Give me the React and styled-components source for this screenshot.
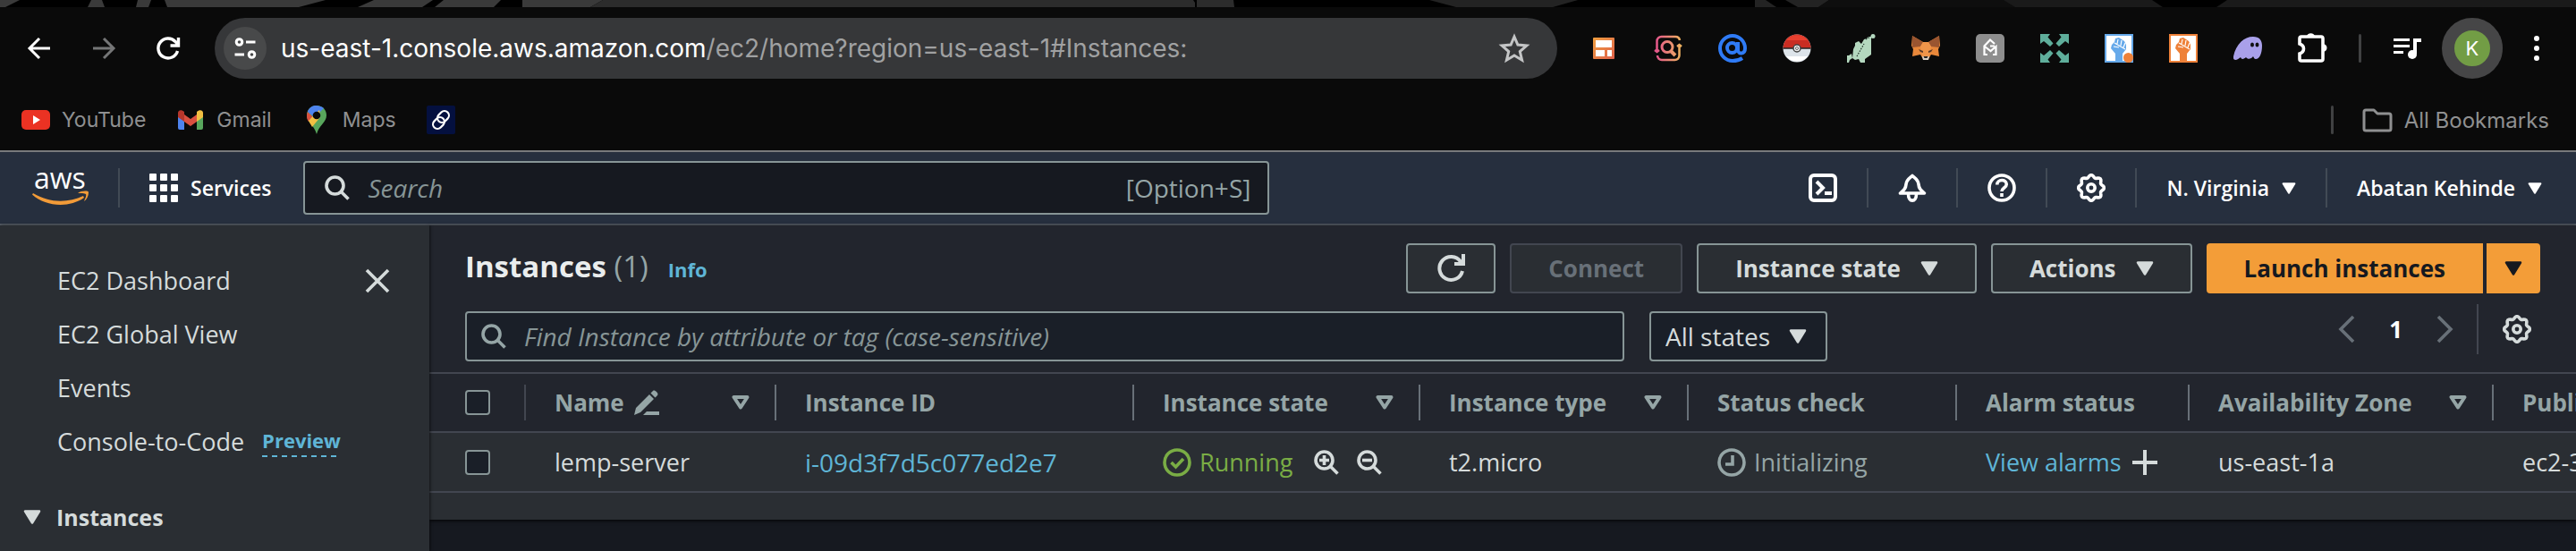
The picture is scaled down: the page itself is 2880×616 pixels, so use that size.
import React from 'react';
import styled, { createGlobalStyle } from 'styled-components';

const ui = '"Open Sans", "Noto Sans", sans-serif';
const browserUi = 'Inter, "Liberation Sans", sans-serif';

const c = {
  text: '#d5dbdb',
  muted: '#95a5a6',
  disabled: '#687078',
  link: '#5fb5d6',
  line: '#424650',
  control: '#879596',
  panel: '#2a2e33',
  header: '#22252d',
  field: '#1a1f28',
  page: '#161920',
  orange: '#f39d38',
  green: '#7aad45',
};

const GlobalStyle = createGlobalStyle`
  * { box-sizing: border-box; }
  html, body { margin: 0; background: ${c.page}; }
  body { overflow: hidden; }
  button, input, select { font: inherit; color: inherit; margin: 0; }
  button { border: 0; padding: 0; background: none; cursor: pointer; }
  a { color: inherit; text-decoration: none; }
  svg { display: block; flex: none; }
`;

/* ---------- Page ---------- */

const Page = styled.div`
  display: flex;
  flex-direction: column;
  min-height: 100vh;
  font-family: ${ui};
  color: ${c.text};
`;

/* ---------- Browser chrome ---------- */

const Browser = styled.header`
  background: #0a0a0a;
  font-family: ${browserUi};
  color: #8f9091;
`;

const Wallpaper = styled.svg`
  width: 100%;
  height: 8px;
`;

const Toolbar = styled.div`
  display: flex;
  align-items: center;
  padding: 12px 28px;
`;

const Cluster = styled.div`
  display: flex;
  align-items: center;
  gap: ${(p) => p.$gap}px;
`;

const IconButton = styled.button`
  display: flex;
  align-items: center;
  justify-content: center;
  width: 32px;
  height: 32px;
  color: ${(p) => p.$color || '#fff'};
`;

const AddressBar = styled.div`
  display: flex;
  flex: 1;
  align-items: center;
  gap: 16px;
  min-width: 0;
  height: 68px;
  margin: 0 36px;
  padding: 0 32px 0 10px;
  border-radius: 34px;
  background: #363739;
`;

const SiteInfo = styled.button`
  display: flex;
  flex: none;
  align-items: center;
  justify-content: center;
  width: 48px;
  height: 48px;
  border-radius: 50%;
  background: #48494a;
  color: #fff;
`;

const Address = styled.div`
  flex: 1;
  font-size: 28px;
  line-height: 40px;
  white-space: nowrap;
  color: #a0a1a2;
`;

const Host = styled.span`
  color: #fff;
`;

const Rule = styled.span`
  flex: none;
  width: 3px;
  height: 32px;
  border-radius: 2px;
  background: #404142;
  margin: ${(p) => p.$margin || '0'};
`;

const Avatar = styled.button`
  display: flex;
  align-items: center;
  justify-content: center;
  width: 68px;
  height: 68px;
  margin: 0 22px;
  border: 14px solid #464647;
  border-radius: 50%;
  background: #729d45;
  color: #fff;
  font-size: 22px;
`;

const Bookmarks = styled.nav`
  display: flex;
  align-items: center;
  justify-content: space-between;
  height: 68px;
  padding: 0 30px 0 24px;
`;

const Bookmark = styled.a`
  display: flex;
  align-items: center;
  gap: 13px;
  font-size: ${(p) => (p.$large ? 24 : 23)}px;
`;

/* ---------- Console navigation ---------- */

const NavBar = styled.nav`
  display: flex;
  align-items: center;
  justify-content: space-between;
  height: 84px;
  padding: 0 38px 0 36px;
  border-top: 2px solid #787a7c;
  border-bottom: 2px solid #545b64;
  background: #262f3e;
  color: #fff;
  font-size: 23px;
  font-weight: 600;
`;

const NavLeft = styled.div`
  display: flex;
  flex: 1;
  align-items: center;
`;

const NavRule = styled.span`
  flex: none;
  width: 2px;
  height: 44px;
  margin: 0 33px;
  background: #414a55;
`;

const NavItem = styled.button`
  display: flex;
  flex: none;
  align-items: center;
  gap: 14px;
  white-space: nowrap;
`;

const SearchField = styled.label`
  display: flex;
  align-items: center;
  flex: ${(p) => p.$flex};
  min-width: 0;
  height: ${(p) => p.$height}px;
  margin-left: ${(p) => p.$indent || 0}px;
  padding: 0 19px 0 ${(p) => p.$pad}px;
  border: 2px solid ${c.control};
  border-radius: 4px;
  background: ${(p) => p.$fill};
  color: ${(p) => p.$icon};
  font-size: 28px;
  font-weight: 400;

  input {
    flex: 1;
    min-width: 0;
    height: 100%;
    padding: 0 0 0 20px;
    border: 0;
    outline: 0;
    background: transparent;
  }
  input::placeholder {
    color: ${c.control};
    font-style: italic;
    opacity: 1;
  }
  kbd {
    font-family: inherit;
    color: ${c.muted};
  }
`;

/* ---------- Console body ---------- */

const Body = styled.div`
  display: grid;
  flex: 1;
  grid-template-columns: 480px minmax(0, 1fr);
`;

const Sidebar = styled.aside`
  position: relative;
  padding: 32px 44px 0 64px;
  background: ${c.panel};
  box-shadow: 1px 0 3px rgba(0, 0, 0, 0.6);
  font-size: 27px;
  line-height: 60px;
`;

const SideRow = styled.div`
  display: flex;
  align-items: center;
  justify-content: ${(p) => (p.$spread ? 'space-between' : 'flex-start')};
  gap: 20px;
`;

const PreviewTag = styled.a`
  padding-bottom: 4px;
  background: repeating-linear-gradient(90deg, ${c.link} 0 6px, transparent 6px 11px) left bottom / 100% 2px no-repeat;
  color: ${c.link};
  font-size: 22px;
  font-weight: 700;
  line-height: 30px;
`;

const SideGroup = styled.button`
  display: flex;
  align-items: center;
  gap: 17px;
  margin: 24px 0 0 -38px;
  font-size: 25px;
  font-weight: 700;
  line-height: 60px;
`;

const Main = styled.main`
  background: ${c.page};
`;

const Panel = styled.section`
  padding-bottom: 30px;
  background: ${c.panel};
  box-shadow: 0 1px 4px #000;
`;

const PanelHeader = styled.div`
  padding: 20px 40px 12px;
  border-bottom: 2px solid ${c.line};
  background: ${c.header};
`;

const HeaderRow = styled.div`
  display: flex;
  align-items: center;
  justify-content: space-between;
  height: 56px;
`;

const TitleRow = styled.div`
  display: flex;
  align-items: baseline;
  gap: 22px;
  line-height: 56px;
`;

const Title = styled.h1`
  margin: 0;
  font-size: 33px;
  line-height: 52px;
  color: #eaeded;

  span {
    font-weight: 400;
    color: ${c.muted};
  }
`;

const InfoLink = styled.a`
  color: ${c.link};
  font-size: 22px;
  font-weight: 700;
`;

const Button = styled.button`
  display: flex;
  align-items: center;
  justify-content: center;
  gap: 22px;
  height: 56px;
  padding: 0 ${(p) => p.$pad || 41}px;
  border: 2px solid ${c.control};
  border-radius: 4px;
  background: ${c.panel};
  font-size: 26px;
  font-weight: 700;
  white-space: nowrap;

  &:disabled {
    border-color: ${c.line};
    color: ${c.disabled};
  }
`;

const PrimaryButton = styled(Button)`
  border-color: ${c.orange};
  border-radius: ${(p) => (p.$end ? '0 4px 4px 0' : '4px 0 0 4px')};
  background: ${c.orange};
  color: #16191f;
`;

const FilterRow = styled.div`
  display: flex;
  align-items: flex-start;
  justify-content: space-between;
  margin-top: 12px;
`;

const Filters = styled.div`
  display: flex;
  flex: 0 1 1523px;
  gap: 28px;
  min-width: 0;
  padding-top: 8px;
`;

const SelectBox = styled.div`
  display: grid;
  flex: none;
  width: 199px;
  height: 56px;
  align-items: center;
  border: 2px solid ${c.control};
  border-radius: 4px;
  background: ${c.field};
  font-size: 28px;

  select {
    grid-area: 1 / 1;
    width: 100%;
    height: 100%;
    padding: 0 48px 0 16px;
    border: 0;
    outline: 0;
    appearance: none;
    background: transparent;
  }
  svg {
    grid-area: 1 / 1;
    justify-self: end;
    margin-right: 21px;
    pointer-events: none;
  }
`;

const Pager = styled.div`
  display: flex;
  align-items: center;
  height: 56px;
  padding-right: 10px;
  font-size: 26px;
  font-weight: 700;
`;

const PageNumber = styled.span`
  padding: 0 37px;
  color: #fff;
`;

const PagerRule = styled.span`
  width: 2px;
  height: 56px;
  margin: 0 27px 0 26px;
  background: ${c.line};
`;

/* ---------- Table ---------- */

const TableWrap = styled.div`
  overflow: hidden;
`;

const Table = styled.table`
  width: 2708px;
  border-collapse: separate;
  border-spacing: 0;
  table-layout: fixed;
  text-align: left;
  white-space: nowrap;

  th, td {
    padding: 0 0 0 32px;
    border-bottom: 2px solid ${c.line};
  }
  th:first-child, td:first-child { padding-left: 40px; }
  th {
    height: 66px;
    background: ${c.header};
    color: ${c.muted};
    font-size: 26px;
    font-weight: 700;
  }
  td {
    height: 67px;
    font-size: 27px;
  }
`;

const HeadCell = styled.div`
  display: flex;
  align-items: center;
  justify-content: space-between;
  height: 40px;
  padding-right: 28px;
  border-right: 2px solid ${(p) => (p.$dim ? c.line : '#687078')};
`;

const CellRow = styled.span`
  display: flex;
  align-items: center;
  gap: ${(p) => p.$gap || 9}px;
  color: ${(p) => p.$color || 'inherit'};
`;

const ZoomTools = styled.span`
  display: flex;
  gap: 20px;
  margin-left: 15px;
  color: ${c.text};
`;

const CellLink = styled.a`
  color: ${c.link};
`;

const InstanceLink = styled(CellLink)`
  font-size: 28px;
`;

const Checkbox = styled.input`
  display: block;
  width: 28px;
  height: 28px;
  margin: 0;
  appearance: none;
  border: 2px solid ${c.control};
  border-radius: 4px;
  background: ${c.field};
`;

/* ---------- Icons ---------- */

const Stroke = ({ size = 32, w = 3, box = 32, children, ...rest }) => (
  <svg width={size} height={size} viewBox={`0 0 ${box} ${box}`} fill="none" stroke="currentColor" strokeWidth={w} aria-hidden="true" {...rest}>
    {children}
  </svg>
);

const Caret = ({ small }) => (
  <svg width={small ? 16 : 20} height={small ? 13 : 16} viewBox="0 0 20 16" aria-hidden="true">
    <path d="M2 1.5h16L10 14.5z" fill="currentColor" stroke="currentColor" strokeWidth="2.5" strokeLinejoin="round" />
  </svg>
);

const SortCaret = () => (
  <svg width="20" height="16" viewBox="0 0 20 16" aria-hidden="true">
    <path d="M2.5 2h15L10 13.5z" fill="none" stroke="currentColor" strokeWidth="4" strokeLinejoin="round" />
  </svg>
);

const BackIcon = () => <Stroke><path d="M28 16H6M16 5 5 16l11 11" /></Stroke>;
const ForwardIcon = () => <Stroke><path d="M4 16h22M16 5l11 11-11 11" /></Stroke>;
const BrowserReload = () => (
  <Stroke w={3.4}><path d="M26.5 19A11 11 0 1 1 24 8.5L27 12M27.5 4v9h-9" /></Stroke>
);
const TuneIcon = () => (
  <Stroke size={28} w={3} box={28}>
    <circle cx="7.500" cy="7" r="3.300" /><path d="M15 7h10.500M2.500 21h10.500" /><circle cx="21.500" cy="21" r="3.300" />
  </Stroke>
);
const StarIcon = () => (
  <Stroke size={36} box={36} w={3}><path d="m18 5 3.900 9.100 9.900.900-7.500 6.500 2.300 9.700-8.600-5.200-8.600 5.200 2.300-9.700L4.200 15l9.900-.900z" /></Stroke>
);
const SearchIcon = ({ sign }) => (
  <Stroke size={28} box={28} w={3.600}>
    <circle cx="11.500" cy="11.500" r="9.500" /><path d="m18.500 18.500 8 8" />
    {sign && <path d={sign === 'in' ? 'M6 11.500h11M11.500 6v11' : 'M6 11.500h11'} />}
  </Stroke>
);
const GearIcon = () => {
  const pts = [];
  for (let i = 0; i < 72; i += 1) {
    const a = (i / 72) * Math.PI * 2;
    const r = 13 + 1.4 * Math.cos(a * 8);
    pts.push(`${(16 + r * Math.sin(a)).toFixed(2)},${(16 - r * Math.cos(a)).toFixed(2)}`);
  }
  return <Stroke w={3.600}><polygon points={pts.join(' ')} /><circle cx="16" cy="16" r="4.200" /></Stroke>;
};
const ShellIcon = () => (
  <Stroke w={4}><rect x="2" y="2" width="28" height="28" rx="4" /><path d="m9 9 7 7-7 7M18 22h8" /></Stroke>
);
const BellIcon = () => (
  <Stroke w={3.600} strokeLinejoin="round"><path d="M16 2.500c-2 2-6.500 4-7 9.500-.4 5-2.500 6.500-6.500 10h27c-4-3.500-6.100-5-6.500-10-.500-5.500-5-7.500-7-9.500zM11.500 23c0 9.500 9 9.500 9 0" /></Stroke>
);
const HelpIcon = () => (
  <Stroke w={3.600}><circle cx="16" cy="16" r="14" /><path d="M10.800 12.500c0-6.500 10.500-6.500 10.500-.500 0 4-5.300 4-5.300 8M16 22v4" /></Stroke>
);
const AppsIcon = () => (
  <svg width="32" height="32" fill="currentColor" aria-hidden="true">
    {[0, 12, 24].map((y) => [0, 12, 24].map((x) => <rect key={`${x}-${y}`} x={x} y={y} width="8" height="8" rx="1" />))}
  </svg>
);
const AwsLogo = () => (
  <svg width="63" height="72" viewBox="0 -14 63 72" role="img" aria-label="AWS home">
    <text x="2" y="23" fill="#fff" fontFamily="Open Sans, sans-serif" fontSize="32" fontWeight="500">aws</text>
    <path d="M1 28c18 11 39 11 56 3l1 2C41 45 15 43 0 29.500z" fill="#f29b38" />
    <path d="M51 28c4-3 12-3 12-1 0 4-2 8-5 10 1-3 3-6 2-8-1-1-6-1-9-1z" fill="#f29b38" />
  </svg>
);
const RefreshIcon = () => (
  <Stroke w={4}><path d="M29 19A13 13 0 1 1 27 8.500L29 11M30 0v11H20" /></Stroke>
);
const CloseIcon = () => <Stroke size={28} box={28} w={3.600}><path d="m2 2 24 24M26 2 2 26" /></Stroke>;
const Chevron = ({ right }) => (
  <svg width="20" height="32" viewBox="0 0 20 32" fill="none" stroke={c.disabled} strokeWidth="3.600" aria-hidden="true">
    <path d={right ? 'm3 2 14 14L3 30' : 'M17 2 3 16l14 14'} />
  </svg>
);
const EditIcon = () => (
  <svg width="28" height="28" viewBox="0 0 28 28" fill="currentColor" aria-hidden="true">
    <path d="M14 24h14v4H10zM2 20 17 5l5 5L7 25l-7 3zM18.500 3.500 21 1c2-2 7 3 5 5l-2.500 2.500z" />
  </svg>
);
const CheckIcon = () => (
  <Stroke w={3.600}><circle cx="16" cy="16" r="14" /><path d="m9.500 16 5 5 8.500-9" /></Stroke>
);
const ClockIcon = () => (
  <Stroke w={3.600}><circle cx="16" cy="16" r="14" /><path d="M17 8v10H9" /></Stroke>
);
const PlusIcon = () => <Stroke size={28} box={28} w={4}><path d="M14 0v28M0 14h28" /></Stroke>;

const FolderIcon = () => (
  <Stroke size={34} box={34} w={3} strokeLinejoin="round"><path d="M2 8a2 2 0 0 1 2-2h9l4 4h13a2 2 0 0 1 2 2v15a2 2 0 0 1-2 2H4a2 2 0 0 1-2-2z" /></Stroke>
);
const YouTubeIcon = () => (
  <svg width="32" height="32" aria-hidden="true"><rect y="5" width="32" height="22" rx="5" fill="#eb3223" /><path d="m13 11 8 5-8 5z" fill="#fff" /></svg>
);
const GmailIcon = () => (
  <svg width="32" height="32" aria-hidden="true">
    <path d="M2 9h7v18H4a2 2 0 0 1-2-2z" fill="#4e83ee" /><path d="M23 9h7v16a2 2 0 0 1-2 2h-5z" fill="#58a65c" />
    <path d="M9 10v8l7 5 7-5v-8l-7 5z" fill="#d95040" /><path d="M2 8c0-3 4-4 7-1v11l-7-5z" fill="#b6362b" /><path d="M30 8c0-3-4-4-7-1v11l7-5z" fill="#f2bf42" />
  </svg>
);
const MapsIcon = () => (
  <svg width="32" height="32" aria-hidden="true">
    <path d="M16 0C9 0 5 5 5 11c0 8 8 10 11 21 3-11 11-13 11-21 0-6-4-11-11-11z" fill="#58a65c" />
    <path d="M6 7 16 11l8-8C18-2 9 0 6 7z" fill="#4e83ee" /><path d="m6 7 6 6-5 5C4 14 5 9 6 7z" fill="#d95040" />
    <path d="m7 17 12-13 1 9-9 11z" fill="#f2bf42" /><path d="m6 7 6 5 9-9C15-3 8 1 6 7z" fill="#4e83ee" /><circle cx="16" cy="11" r="4.300" fill="#0a0a0a" />
  </svg>
);
const LinkMark = () => (
  <svg width="32" height="32" fill="none" stroke="#fff" strokeWidth="2.200" aria-hidden="true">
    <rect width="32" height="32" rx="2" fill="#04103f" stroke="none" />
    <rect x="11.500" y="7.500" width="14" height="10" rx="5" transform="rotate(-45 18.500 12.500)" />
    <rect x="6.500" y="14.500" width="14" height="10" rx="5" transform="rotate(-45 13.500 19.500)" />
  </svg>
);

const Fist = ({ color, dot }) => (
  <svg width="32" height="32" aria-hidden="true">
    <rect width="32" height="32" fill={color} /><rect x="2" y="2" width="28" height="28" fill="#fff" />
    <path d="M12 32V22L7 16l1-4 3-3 1-4 4-1 3 2 3 2 2 4v5l-4 5v10z" fill={color} />
    <path d="m11 10 12 7M15 6l-1 5M19 7l-1 6M23 10l-2 5M10 14l6 1" stroke="#fff" strokeWidth="1.200" />
    {dot && <circle cx="26.500" cy="26.500" r="5.500" fill="#ee8139" />}
  </svg>
);

const extensions = {
  'Layout blocks': (
    <svg width="32" height="32"><defs><linearGradient id="lay" x2="1" y2="1"><stop stopColor="#f0a040" /><stop offset="1" stopColor="#e0604a" /></linearGradient></defs>
      <rect x="4" y="4" width="24" height="24" rx="1" fill="url(#lay)" /><path d="M7 7h18v8H7zM7 18h10v7H7zM20 18h5v7h-5z" fill="#fff" /></svg>
  ),
  'Image search': (
    <svg width="32" height="32" fill="none" stroke="url(#srch)" strokeWidth="2.500"><defs><linearGradient id="srch" gradientUnits="userSpaceOnUse" x1="2" x2="30"><stop stopColor="#e4548c" /><stop offset="1" stopColor="#efb260" /></linearGradient></defs>
      <path d="M3.500 20V8a5 5 0 0 1 5-5H24a5 5 0 0 1 5 4M28.500 12v12a5 5 0 0 1-5 5H9a5 5 0 0 1-5-5M1 18l2.500 2L6 18M26 14l2.500-2 2.500 2" /><circle cx="15" cy="14.500" r="6" strokeWidth="3" /><path d="m19 19 5 5" strokeWidth="4" /></svg>
  ),
  Mentions: (
    <svg width="32" height="32" fill="none" stroke="#2f7bf6" strokeWidth="4"><circle cx="15.500" cy="15.500" r="5.500" /><path d="M22 9v9c0 5 8 5 8-2A14 14 0 1 0 16 30c4 0 8-1 11-3" /></svg>
  ),
  Ball: (
    <svg width="32" height="32"><circle cx="16" cy="16" r="15.500" fill="#dde4ea" /><path d="M.500 16a15.500 15.500 0 0 1 31 0z" fill="#c92d22" /><path d="M4 7a15.500 15.500 0 0 1 24 0z" fill="#e8402f" /><path d="M4 25a15.500 15.500 0 0 0 24 0z" fill="#fff" /><path d="M.500 16h31" stroke="#222" strokeWidth="1.500" /><circle cx="16" cy="16" r="4" fill="#eee" stroke="#444" strokeWidth="1.500" /><circle cx="16" cy="16" r="1.500" fill="#fff" stroke="#666" /></svg>
  ),
  Chart: (
    <svg width="32" height="32" fill="#b4d8bf"><path d="M0 24h2l3-2 1 5-3 2-1 3H0zM6 27l1-10 2-4V10l4-2 3 3 3-5 3-1 2-2h3v20l-7 5v4h-5l-2-4-4 1z" /><circle cx="29" cy="2.500" r="2.500" /><path d="m11 25 8-14M21 6l5-3" stroke="#203028" strokeWidth="1.200" strokeDasharray="1.500 1.500" /></svg>
  ),
  Fox: (
    <svg width="32" height="32"><path d="M1 2 13 9h6L31 2l1 11-2 4 1 8-9-2-3 5h-6l-3-5-9 2 1-8-2-4z" fill="#e8873a" /><path d="m1 2 12 7-3 5-9 1zM31 2 19 9l3 5 9 1z" fill="#9a5530" /><path d="m10 14 3-5h6l3 5-2 11h-8z" fill="#f0954a" /><path d="m8 17 5 2v2l-3-1zM24 17l-5 2v2l3-1z" fill="#5a3a28" /><path d="M12 25h8l-1 4h-6z" fill="#d9cfc4" /><path d="M13.500 25h5l-1 2h-3z" fill="#222" /></svg>
  ),
  Monogram: (
    <svg width="32" height="32" fill="none" stroke="#fff" strokeWidth="2.200"><rect width="32" height="32" rx="5" fill="#8e8e8e" stroke="none" /><path d="M21 11 16 6.500 9.500 13.500V23H13M10 14l6.500 5 6-5V23H19M16 13.500h5" /></svg>
  ),
  Expand: (
    <svg width="32" height="32" fill="#5fae9b"><path id="arr" d="M0 0h11L8.500 3.500l6 7-3.500 3.500-7-6L0 11z" /><use href="#arr" transform="matrix(-1 0 0 1 32 0)" /><use href="#arr" transform="matrix(1 0 0 -1 0 32)" /><use href="#arr" transform="matrix(-1 0 0 -1 32 32)" /></svg>
  ),
  'Fist blue': <Fist color="#66a9ea" dot />,
  'Fist orange': <Fist color="#ee8139" />,
  Ghost: (
    <svg width="32" height="32"><path d="M0 25C3 11 12 3 22 3c7 0 10 4 10 10 0 9-3 15-7 15-2 0-2-2-3-3-2 3-6 4-8 1-2 2-5 3-6 0-3 3-9 5-8-1z" fill="#a9a0ea" /><ellipse cx="21" cy="12" rx="2" ry="2.500" fill="#111" /><ellipse cx="26.500" cy="12" rx="2" ry="2.500" fill="#111" /></svg>
  ),
  Extensions: (
    <svg width="34" height="34" viewBox="0 0 34 34"><path d="M3 6a2 2 0 0 1 2-2h22a2 2 0 0 1 2 2v23a2 2 0 0 1-2 2H5a2 2 0 0 1-2-2v-6c6-2 6-9 0-11z" fill="none" stroke="#fff" strokeWidth="3.600" /><path d="M11 4c0-5 9-5 9 0zM29 12c6 0 6 9 0 9z" fill="#fff" /></svg>
  ),
};

const MediaIcon = () => (
  <svg width="32" height="32" fill="#fff" aria-hidden="true"><path d="M0 5h18v3H0zM0 12h18v3H0zM0 19h11v3H0zM22 5h9v4h-5v13h-4z" /><circle cx="21" cy="23" r="5" /></svg>
);
const DotsIcon = () => (
  <svg width="32" height="32" fill="#fff" aria-hidden="true"><circle cx="16" cy="5" r="3" /><circle cx="16" cy="16" r="3" /><circle cx="16" cy="27" r="3" /></svg>
);

/* ---------- Data ---------- */

const columns = [
  { label: 'Name', width: 280, edit: true, sort: true },
  { label: 'Instance ID', width: 400 },
  { label: 'Instance state', width: 320, sort: true },
  { label: 'Instance type', width: 300, sort: true },
  { label: 'Status check', width: 300 },
  { label: 'Alarm status', width: 260 },
  { label: 'Availability Zone', width: 340, sort: true },
  { label: 'Public IPv4 DNS', width: 400 },
];

const Strip = () => (
  <Wallpaper viewBox="0 0 2880 8" preserveAspectRatio="none" aria-hidden="true">
    <path d="M0 0h2880v8H0z" fill="#000" />
    <path d="M0 0h22L6 8H0zM102 0h12l3 8H98zM154 0h15l-3 8h-14zM184 0h180l-30 8H187zM418 0h66l-12 8h-72zM496 0h64l-8 8h-66zM584 0h90l-14 8h-76z" fill="#3a3a3a" />
    <path d="M674 0h660l2 3v5H660zM1338 0h41l1 8h-42z" fill="#2c2c2c" />
    <path d="M1598 0h166l-28 8h-108zM1962 0h12l12 8h-24zM1996 0h49l-12 8h-23z" fill="#232323" />
    <path d="M2045 0h198l12 8h-222z" fill="#0e0e0e" /><path d="M2240 0h166l12 8h-165zM2490 0h390v8H2478z" fill="#1a1a1a" />
  </Wallpaper>
);

export default function App() {
  return (
    <Page>
      <GlobalStyle />
      <Browser>
        <Strip />
        <Toolbar>
          <Cluster $gap={40}>
            <IconButton aria-label="Back"><BackIcon /></IconButton>
            <IconButton aria-label="Forward" $color="#757677"><ForwardIcon /></IconButton>
            <IconButton aria-label="Reload"><BrowserReload /></IconButton>
          </Cluster>
          <AddressBar>
            <SiteInfo aria-label="Site information"><TuneIcon /></SiteInfo>
            <Address><Host>us-east-1.console.aws.amazon.com</Host>/ec2/home?region=us-east-1#Instances:</Address>
            <IconButton aria-label="Bookmark this page" $color="#c4c5c6"><StarIcon /></IconButton>
          </AddressBar>
          <Cluster $gap={40}>
            {Object.entries(extensions).map(([name, icon]) => (
              <IconButton key={name} aria-label={name}>{icon}</IconButton>
            ))}
          </Cluster>
          <Rule $margin="0 36px" />
          <IconButton aria-label="Media controls"><MediaIcon /></IconButton>
          <Avatar aria-label="Profile">K</Avatar>
          <IconButton aria-label="Menu"><DotsIcon /></IconButton>
        </Toolbar>
        <Bookmarks>
          <Cluster $gap={34}>
            <Bookmark href="#youtube"><YouTubeIcon />YouTube</Bookmark>
            <Bookmark href="#gmail"><GmailIcon />Gmail</Bookmark>
            <Bookmark href="#maps"><MapsIcon />Maps</Bookmark>
            <Bookmark href="#link" aria-label="Saved link"><LinkMark /></Bookmark>
          </Cluster>
          <Cluster $gap={32}>
            <Rule />
            <Bookmark href="#bookmarks" $large><FolderIcon />All Bookmarks</Bookmark>
          </Cluster>
        </Bookmarks>
      </Browser>

      <NavBar>
        <NavLeft>
          <a href="#home"><AwsLogo /></a>
          <NavRule />
          <NavItem><AppsIcon />Services</NavItem>
          <SearchField $flex="0 1 1080px" $height={60} $indent={36} $pad={22} $fill={c.page} $icon={c.text}>
            <SearchIcon />
            <input type="search" placeholder="Search" aria-label="Search" />
            <kbd>[Option+S]</kbd>
          </SearchField>
        </NavLeft>
        <NavItem aria-label="CloudShell"><ShellIcon /></NavItem>
        <NavRule />
        <NavItem aria-label="Notifications"><BellIcon /></NavItem>
        <NavRule />
        <NavItem aria-label="Help"><HelpIcon /></NavItem>
        <NavRule />
        <NavItem aria-label="Settings"><GearIcon /></NavItem>
        <NavRule />
        <NavItem>N. Virginia<Caret small /></NavItem>
        <NavRule />
        <NavItem>Abatan Kehinde<Caret small /></NavItem>
      </NavBar>

      <Body>
        <Sidebar>
          <SideRow $spread>
            <a href="#dashboard">EC2 Dashboard</a>
            <button type="button" aria-label="Close navigation"><CloseIcon /></button>
          </SideRow>
          <SideRow><a href="#global">EC2 Global View</a></SideRow>
          <SideRow><a href="#events">Events</a></SideRow>
          <SideRow>
            <a href="#console-to-code">Console-to-Code</a>
            <PreviewTag href="#preview">Preview</PreviewTag>
          </SideRow>
          <SideGroup><Caret />Instances</SideGroup>
        </Sidebar>

        <Main>
          <Panel>
            <PanelHeader>
              <HeaderRow>
                <TitleRow>
                  <Title>Instances <span>(1)</span></Title>
                  <InfoLink href="#info">Info</InfoLink>
                </TitleRow>
                <Cluster $gap={16}>
                  <Button $pad={32} aria-label="Refresh"><RefreshIcon /></Button>
                  <Button disabled>Connect</Button>
                  <Button>Instance state<Caret /></Button>
                  <Button>Actions<Caret /></Button>
                  <Cluster $gap={4}>
                    <PrimaryButton $pad={40}>Launch instances</PrimaryButton>
                    <PrimaryButton $end $pad={18} aria-label="More launch options"><Caret /></PrimaryButton>
                  </Cluster>
                </Cluster>
              </HeaderRow>
              <FilterRow>
                <Filters>
                  <SearchField $flex="1" $height={56} $pad={16} $fill={c.field} $icon={c.muted}>
                    <SearchIcon />
                    <input type="search" placeholder="Find Instance by attribute or tag (case-sensitive)" aria-label="Find instance" />
                  </SearchField>
                  <SelectBox>
                    <select aria-label="Instance state filter"><option>All states</option></select>
                    <Caret />
                  </SelectBox>
                </Filters>
                <Pager>
                  <button type="button" aria-label="Previous page"><Chevron /></button>
                  <PageNumber>1</PageNumber>
                  <button type="button" aria-label="Next page"><Chevron right /></button>
                  <PagerRule />
                  <button type="button" aria-label="Preferences"><GearIcon /></button>
                </Pager>
              </FilterRow>
            </PanelHeader>

            <TableWrap>
              <Table>
                <colgroup>
                  <col width="108" />
                  {columns.map((col) => <col key={col.label} width={col.width} />)}
                </colgroup>
                <thead>
                  <tr>
                    <th scope="col"><HeadCell $dim><Checkbox type="checkbox" aria-label="Select all instances" /></HeadCell></th>
                    {columns.map((col) => (
                      <th key={col.label} scope="col">
                        <HeadCell>
                          <CellRow $gap={11}>{col.label}{col.edit && <EditIcon />}</CellRow>
                          {col.sort && <SortCaret />}
                        </HeadCell>
                      </th>
                    ))}
                  </tr>
                </thead>
                <tbody>
                  <tr>
                    <td><Checkbox type="checkbox" aria-label="Select lemp-server" /></td>
                    <td>lemp-server</td>
                    <td><InstanceLink href="#instance">i-09d3f7d5c077ed2e7</InstanceLink></td>
                    <td>
                      <CellRow $color={c.green}>
                        <CheckIcon />Running
                        <ZoomTools>
                          <button type="button" aria-label="Include filter"><SearchIcon sign="in" /></button>
                          <button type="button" aria-label="Exclude filter"><SearchIcon sign="out" /></button>
                        </ZoomTools>
                      </CellRow>
                    </td>
                    <td>t2.micro</td>
                    <td><CellRow $color={c.muted}><ClockIcon />Initializing</CellRow></td>
                    <td>
                      <CellRow $gap={12}>
                        <CellLink href="#alarms">View alarms</CellLink>
                        <button type="button" aria-label="Create alarm"><PlusIcon /></button>
                      </CellRow>
                    </td>
                    <td>us-east-1a</td>
                    <td>ec2-3-</td>
                  </tr>
                </tbody>
              </Table>
            </TableWrap>
          </Panel>
        </Main>
      </Body>
    </Page>
  );
}
